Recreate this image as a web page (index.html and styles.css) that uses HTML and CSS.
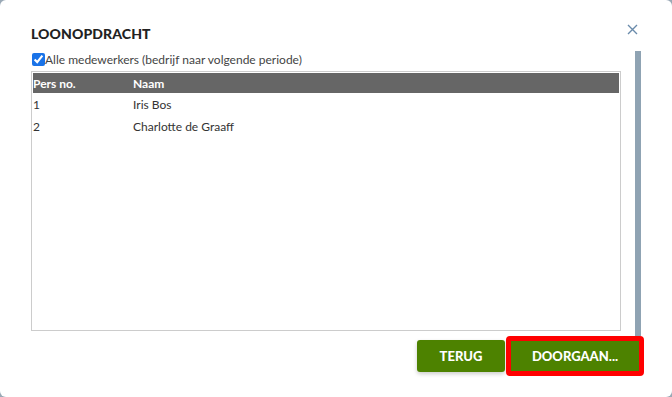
FILE: index.html
```html
<!DOCTYPE html>
<html lang="en">
<head>
    <meta charset="UTF-8">
    <title>Loonopdracht</title>
    <link rel="stylesheet" href="styles.css">
</head>
<body>
    <div class="dialog">
        <div class="dialog-head">
            <span class="dialog-title">LOONOPDRACHT</span>
            <button class="dialog-close" aria-label="Sluiten">
                <svg width="11" height="11" viewBox="0 0 11 11">
                    <path d="M1 1L10 10M10 1L1 10" stroke="#6a8bab" stroke-width="1.4" fill="none"/>
                </svg>
            </button>
        </div>
        <div class="dialog-main">
            <div class="dialog-content">
                <label class="check-row">
                    <input type="checkbox" checked>Alle medewerkers (bedrijf naar volgende periode)
                </label>
                <div class="grid-box">
                    <table class="grid">
                        <thead>
                            <tr><th class="col-nr">Pers no.</th><th>Naam</th></tr>
                        </thead>
                        <tbody>
                            <tr><td class="col-nr">1</td><td>Iris Bos</td></tr>
                            <tr><td class="col-nr">2</td><td>Charlotte de Graaff</td></tr>
                        </tbody>
                    </table>
                </div>
            </div>
            <div class="scrollbar"></div>
        </div>
        <div class="dialog-foot">
            <button class="btn">TERUG</button>
            <div class="highlight">
                <button class="btn btn-wide">DOORGAAN...</button>
            </div>
        </div>
    </div>
</body>
</html>
```

FILE: styles.css
```css
body {
    margin: 0;
    padding: 0;
    background: #9aa9b6;
    font-family: Lato, "Open Sans", sans-serif;
    color: #333;
}
.dialog {
    width: 672px;
    height: 397px;
    box-sizing: border-box;
    background: #fff;
    border-radius: 6px;
    padding: 24px 28px 0 31px;
}
.dialog-head {
    display: flex;
    justify-content: space-between;
    align-items: center;
    height: 20px;
}
.dialog-title {
    font-size: 14px;
    font-weight: 900;
    line-height: 20px;
    letter-spacing: 0.1px;
    color: #222;
}
.dialog-close {
    border: none;
    background: none;
    padding: 0;
    margin: -9px 6px 0 0;
    width: 11px;
    height: 11px;
    line-height: 0;
    cursor: pointer;
}
.dialog-main {
    display: flex;
    margin-top: 7px;
    height: 285px;
}
.dialog-content {
    width: 590px;
}
.check-row {
    display: flex;
    align-items: center;
    height: 16px;
    font-size: 12px;
    color: #444;
}
.check-row input {
    margin: 0 0 0 1px;
    width: 13px;
    height: 13px;
    accent-color: #1a73e8;
}
.grid-box {
    margin-top: 4px;
    height: 260px;
    box-sizing: border-box;
    border: 1px solid #ccc;
    padding: 1px;
}
.grid {
    width: 100%;
    border-collapse: collapse;
    font-size: 12px;
}
.grid th {
    background: #666;
    color: #fff;
    text-align: left;
    font-weight: bold;
    height: 20px;
    padding: 0;
}
.grid td {
    height: 22px;
    padding: 0;
    color: #333;
}
.grid .col-nr {
    width: 100px;
}
.scrollbar {
    width: 6px;
    margin-left: 14px;
    background: #8fa3b3;
}
.dialog-foot {
    display: flex;
    justify-content: flex-end;
    align-items: center;
    height: 40px;
    gap: 1px;
}
.btn {
    background: #4d8200;
    color: #fff;
    border: none;
    border-radius: 3px;
    font-family: Lato, "Open Sans", sans-serif;
    font-size: 13px;
    font-weight: 900;
    width: 88px;
    height: 32px;
    padding: 0;
    box-shadow: 0 2px 4px rgba(0,0,0,0.2);
    cursor: pointer;
}
.highlight {
    border: 5px solid #f00;
    border-radius: 4px;
    line-height: 0;
}
.btn-wide {
    width: 128px;
    height: 30px;
    border-radius: 0;
    box-shadow: none;
}
```
